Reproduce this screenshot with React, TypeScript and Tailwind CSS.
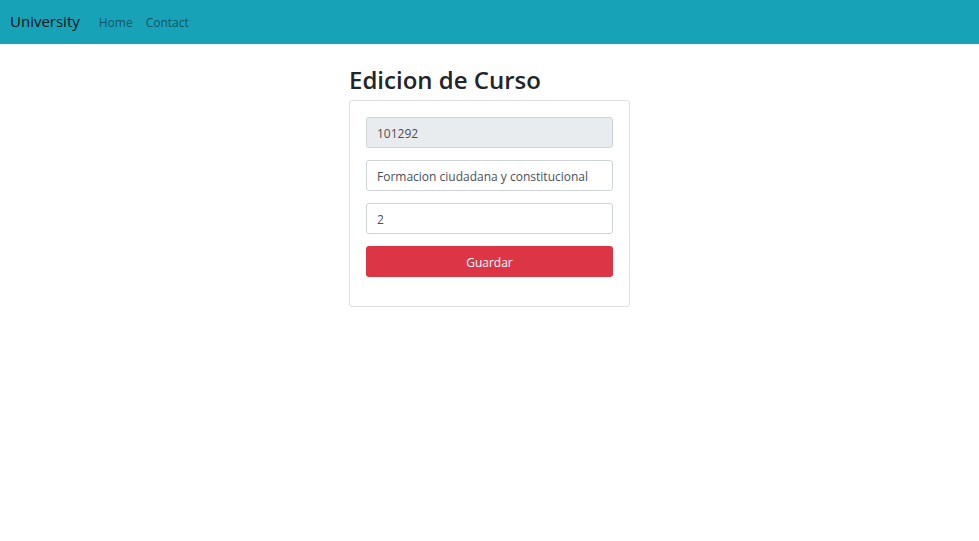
const field =
  'block h-[31px] w-full rounded-[3px] border border-[#ced4da] px-[10px] pt-[2px] text-[12px] text-[#495057] outline-none focus:border-[#80bdff]';

function Navbar() {
  return (
    <nav className="flex h-11 items-center bg-[#17a2b8] px-[10px]">
      <a href="#" className="mr-3 pb-[2px] text-[15px] leading-6 text-black/90">
        University
      </a>
      <ul className="flex pt-[2px] text-[12px] leading-5 text-black/50">
        <li>
          <a href="#" className="px-[7px]">
            Home
          </a>
        </li>
        <li>
          <a href="#" className="px-[6px]">
            Contact
          </a>
        </li>
      </ul>
    </nav>
  );
}

export default function App() {
  return (
    <div className="font-['Open_Sans','Noto_Sans',sans-serif] text-[#212529]">
      <Navbar />
      <main className="mx-auto w-full max-w-[281px] pt-5">
        <h1 className="mb-1 text-[24px] leading-8 font-semibold">Edicion de Curso</h1>
        <form
          className="flex flex-col gap-3 rounded-[3px] border border-[#dfdfdf] px-4 pt-4 pb-[29px]"
          onSubmit={(event) => event.preventDefault()}
        >
          <input
            aria-label="Codigo"
            readOnly
            defaultValue="101292"
            className={`${field} bg-[#e9ecef]`}
          />
          <input
            aria-label="Nombre"
            defaultValue="Formacion ciudadana y constitucional"
            className={`${field} bg-white`}
          />
          <input aria-label="Creditos" defaultValue="2" className={`${field} bg-white`} />
          <button
            type="submit"
            className="h-[31px] w-full rounded-[3px] bg-[#dc3545] pt-[2px] text-[12px] text-white"
          >
            Guardar
          </button>
        </form>
      </main>
    </div>
  );
}
